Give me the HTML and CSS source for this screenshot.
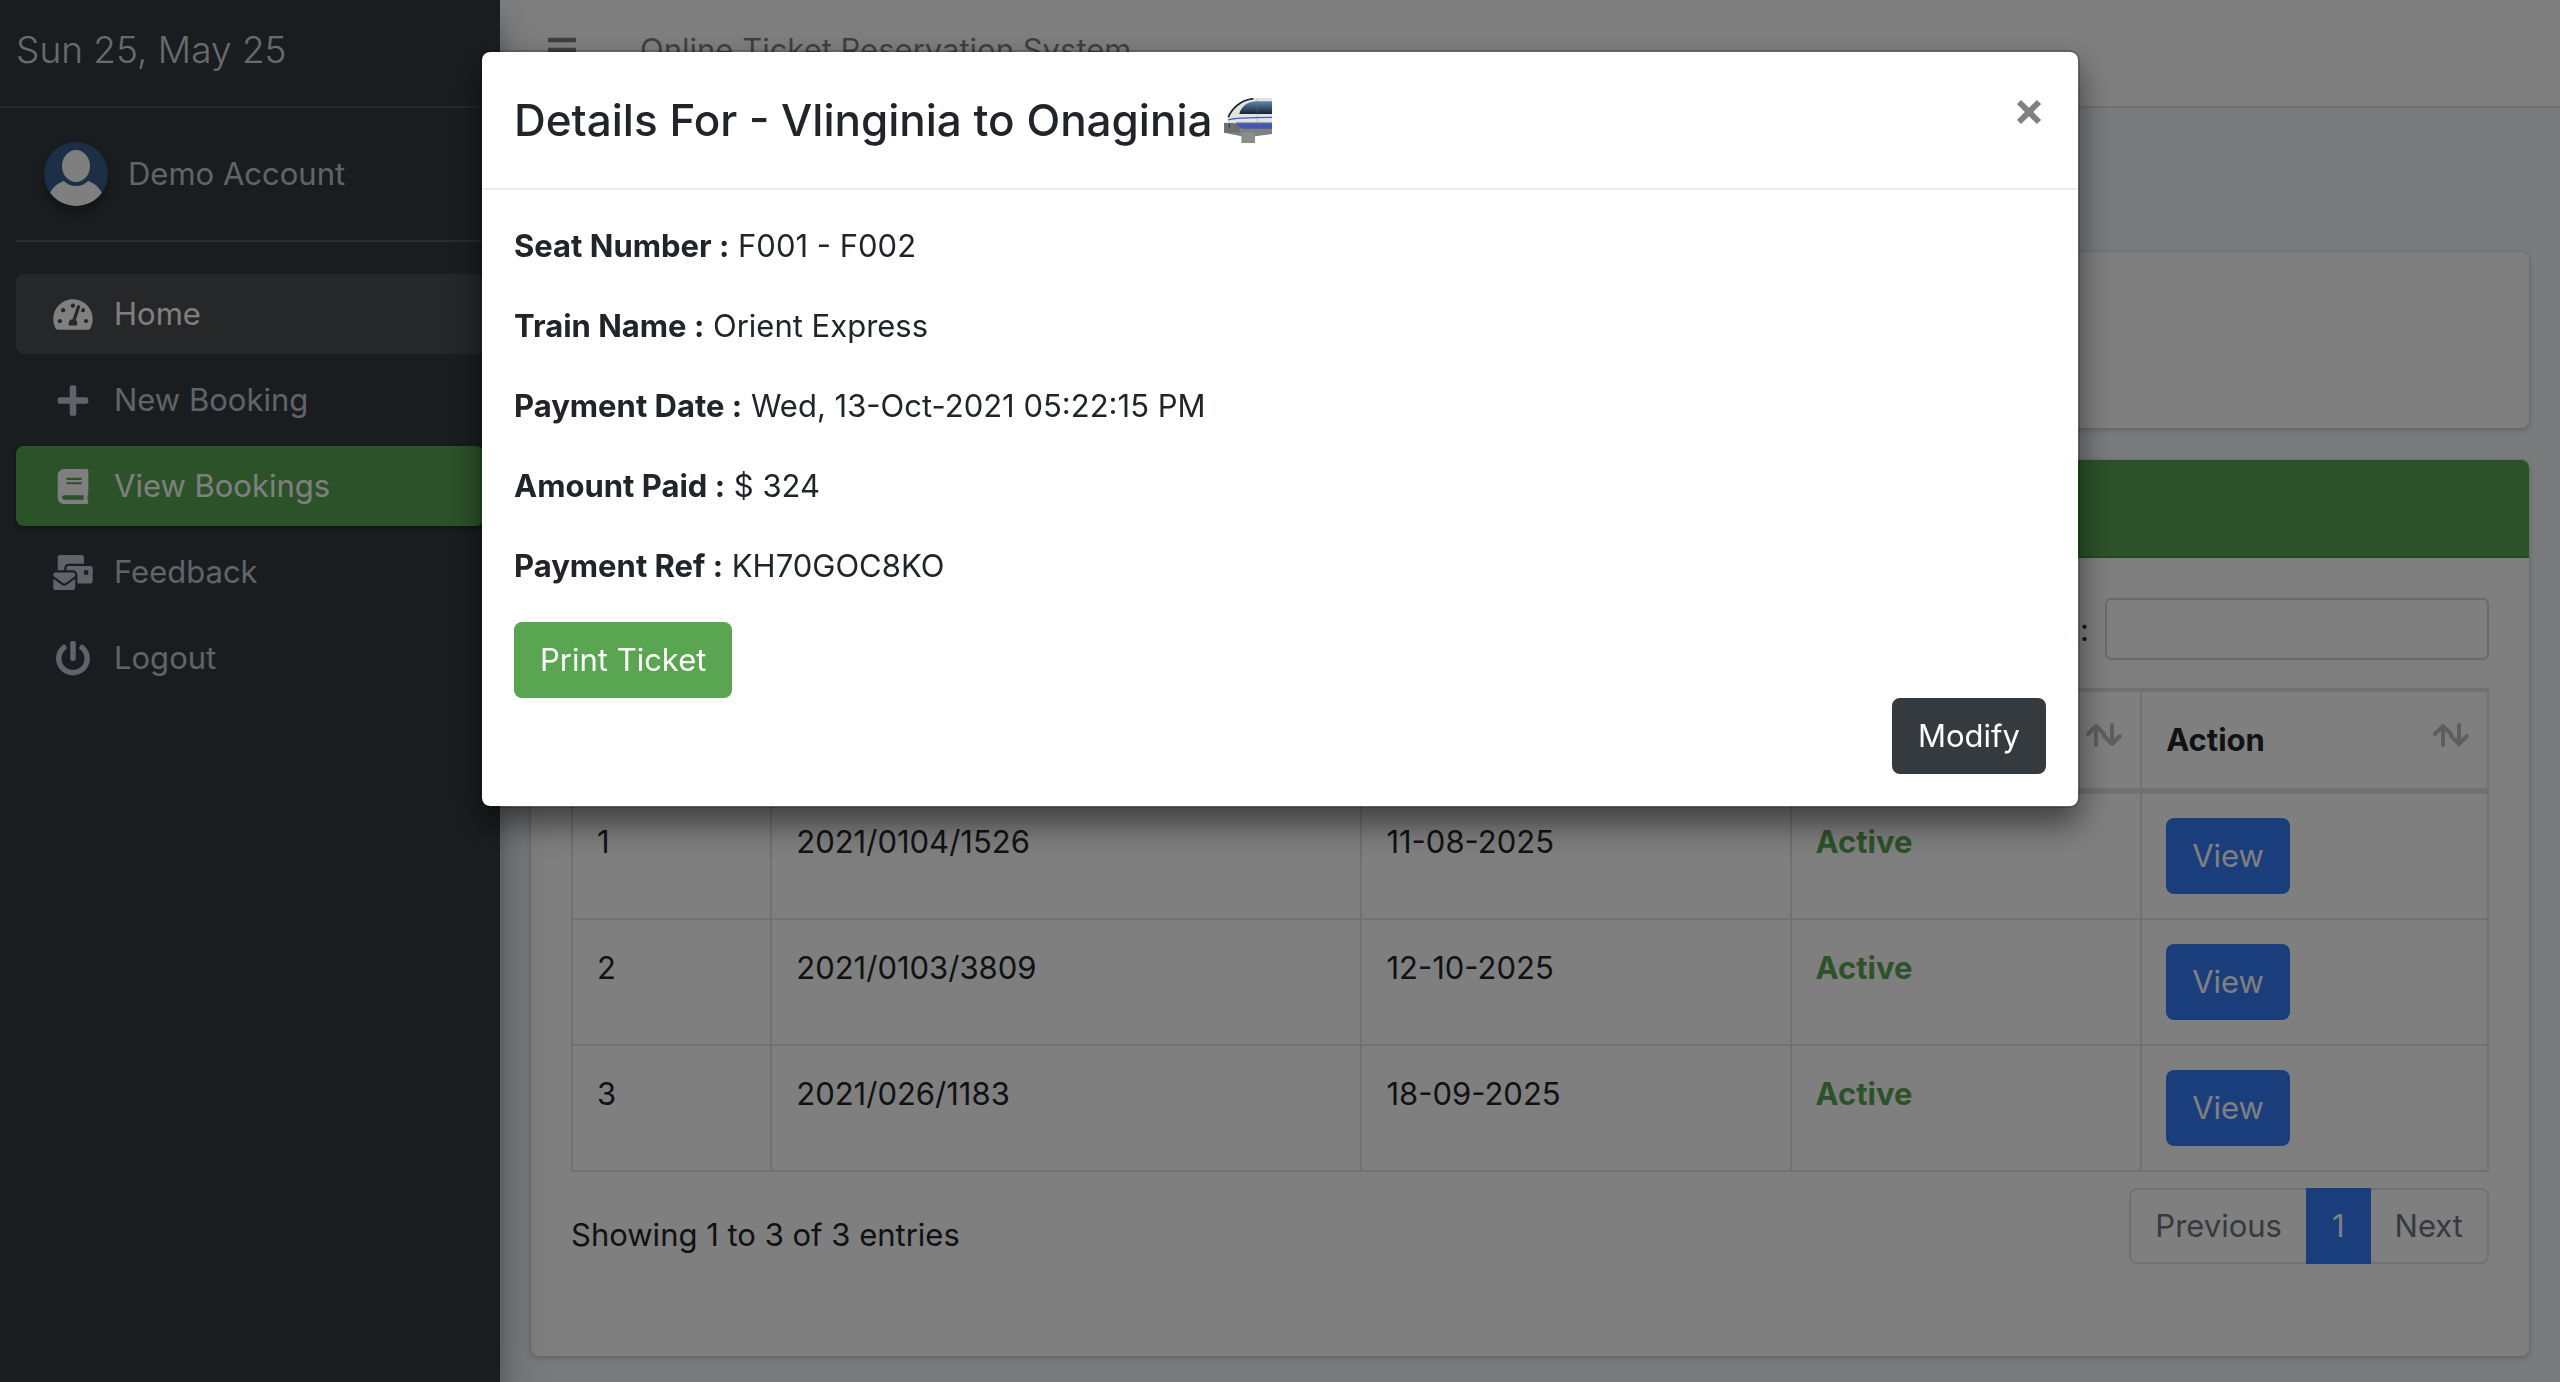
FILE: index.html
```html
<!DOCTYPE html>
<html lang="en">
<head>
  <meta charset="UTF-8" />
  <meta name="viewport" content="width=device-width, initial-scale=1.0"/>
  <title>Online Ticket Reservation System</title>
  <link rel="stylesheet" href="styles.css">
</head>
<body>

<div class="wrapper">

  <!-- Sidebar -->
  <aside class="sidebar">
    <a href="#" class="brand">Sun 25, May 25</a>
    <div class="sidebar-inner">
      <div class="user-panel">
        <svg class="avatar" viewBox="0 0 64 64">
          <circle cx="32" cy="32" r="32" fill="#365f8f"/>
          <ellipse cx="32" cy="24" rx="14" ry="16" fill="#fff"/>
          <path d="M6 51C9 45 14 41 20 39c3 3 7 5 12 5s9-2 12-5c6 2 11 6 14 12A32 32 0 0 1 6 51z" fill="#fff"/>
        </svg>
        <a href="#">Demo Account</a>
      </div>
      <nav class="menu">
        <a href="#" class="menu-link current">
          <svg class="menu-icon" viewBox="0 0 576 512"><path d="M288 32C128.94 32 0 160.94 0 320c0 52.8 14.25 102.26 39.06 144.8 5.61 9.62 16.3 15.2 27.44 15.2h443c11.14 0 21.83-5.58 27.44-15.2C561.75 422.26 576 372.8 576 320c0-159.06-128.94-288-288-288zm0 64c14.71 0 26.58 10.13 30.32 23.65-1.11 2.26-2.64 4.23-3.45 6.67l-9.22 27.67c-5.13 3.49-10.97 6.01-17.64 6.01-17.67 0-32-14.33-32-32S270.33 96 288 96zM96 384c-17.67 0-32-14.33-32-32s14.33-32 32-32 32 14.33 32 32-14.33 32-32 32zm48-160c-17.67 0-32-14.33-32-32s14.33-32 32-32 32 14.33 32 32-14.33 32-32 32zm246.77-72.41l-61.33 184C343.13 347.33 352 364.54 352 384c0 11.72-3.38 22.55-8.88 32H232.88c-5.5-9.45-8.88-20.28-8.88-32 0-33.94 26.5-61.43 59.9-63.59l61.34-184.01c4.17-12.56 17.73-19.45 30.36-15.17 12.57 4.19 19.35 17.79 15.17 30.36zm14.66 57.2l15.52-46.55c3.47-1.29 7.13-2.23 11.05-2.23 17.67 0 32 14.33 32 32s-14.33 32-32 32c-11.38-.01-20.89-6.28-26.57-15.22zM480 384c-17.67 0-32-14.33-32-32s14.33-32 32-32 32 14.33 32 32-14.33 32-32 32z"/></svg>
          Home
        </a>
        <a href="#" class="menu-link">
          <svg class="menu-icon" viewBox="0 0 448 512"><path d="M416 208H272V64c0-17.67-14.33-32-32-32h-32c-17.67 0-32 14.33-32 32v144H32c-17.67 0-32 14.33-32 32v32c0 17.67 14.33 32 32 32h144v144c0 17.67 14.33 32 32 32h32c17.67 0 32-14.33 32-32V304h144c17.67 0 32-14.33 32-32v-32c0-17.67-14.33-32-32-32z"/></svg>
          New Booking
        </a>
        <a href="#" class="menu-link active">
          <svg class="menu-icon" viewBox="0 0 448 512"><path d="M448 360V24c0-13.3-10.7-24-24-24H96C43 0 0 43 0 96v320c0 53 43 96 96 96h328c13.3 0 24-10.7 24-24v-16c0-7.5-3.5-14.3-8.9-18.7-4.2-15.4-4.2-59.3 0-74.7 5.4-4.3 8.9-11.1 8.9-18.6zM128 134c0-3.3 2.7-6 6-6h212c3.3 0 6 2.7 6 6v20c0 3.3-2.7 6-6 6H134c-3.3 0-6-2.7-6-6v-20zm0 64c0-3.3 2.7-6 6-6h212c3.3 0 6 2.7 6 6v20c0 3.3-2.7 6-6 6H134c-3.3 0-6-2.7-6-6v-20zm253.4 250H96c-17.7 0-32-14.3-32-32 0-17.6 14.4-32 32-32h285.4c-1.9 17.1-1.9 46.9 0 64z"/></svg>
          View Bookings
        </a>
        <a href="#" class="menu-link">
          <svg class="menu-icon" viewBox="0 0 576 512"><path d="M160 448c-25.6 0-51.2-22.4-64-32-64-44.8-83.2-60.8-96-70.4V480c0 17.67 14.33 32 32 32h256c17.67 0 32-14.33 32-32V345.6c-12.8 9.6-32 25.6-96 70.4-12.8 9.6-38.4 32-64 32zm128-192H32c-17.67 0-32 14.33-32 32v16c25.6 19.2 22.4 19.2 115.2 86.4 9.6 6.4 28.8 25.6 44.8 25.6s35.2-19.2 44.8-22.4c92.8-67.2 89.6-67.2 115.2-86.4V288c0-17.67-14.33-32-32-32zm256-96H224c-17.67 0-32 14.33-32 32v32h96c33.21 0 60.59 25.42 63.71 57.82l.29-.22V416h192c17.67 0 32-14.33 32-32V192c0-17.67-14.33-32-32-32zm-32 128h-64v-64h64v64zm-352-96c0-35.29 28.71-64 64-64h224V32c0-17.67-14.33-32-32-32H96C78.33 0 64 14.33 64 32v192h96v-32z"/></svg>
          Feedback
        </a>
        <a href="#" class="menu-link">
          <svg class="menu-icon" viewBox="0 0 512 512"><path d="M400 54.1c63 45 104 118.6 104 201.9 0 136.8-110.8 247.7-247.5 248C120 504.3 8.2 393 8 256.4 7.9 173.1 48.9 99.3 111.8 54.2c11.7-8.3 28-4.8 35 7.7L162.6 90c5.9 10.5 3.1 23.8-6.6 31-41.5 30.8-68 79.6-68 134.9-.1 92.3 74.5 168.1 168 168.1 91.6 0 168.6-74.2 168-169.1-.3-51.8-24.7-101.8-68.1-134-9.7-7.2-12.4-20.5-6.5-30.9l15.8-28.1c7-12.4 23.2-16.1 34.8-7.8zM296 264V24c0-13.3-10.7-24-24-24h-32c-13.3 0-24 10.7-24 24v240c0 13.3 10.7 24 24 24h32c13.3 0 24-10.7 24-24z"/></svg>
          Logout
        </a>
      </nav>
    </div>
  </aside>

  <!-- Page -->
  <div class="page">
    <header class="topbar">
      <a href="#" class="toggle" aria-label="Toggle menu">
        <svg viewBox="0 0 448 512"><path d="M16 132h416c8.837 0 16-7.163 16-16V76c0-8.837-7.163-16-16-16H16C7.163 60 0 67.163 0 76v40c0 8.837 7.163 16 16 16zm0 160h416c8.837 0 16-7.163 16-16v-40c0-8.837-7.163-16-16-16H16c-8.837 0-16 7.163-16 16v40c0 8.837 7.163 16 16 16zm0 160h416c8.837 0 16-7.163 16-16v-40c0-8.837-7.163-16-16-16H16c-8.837 0-16 7.163-16 16v40c0 8.837 7.163 16 16 16z"/></svg>
      </a>
      <a href="#">Online Ticket Reservation System</a>
    </header>

    <main class="content">
      <section class="card card-intro"></section>

      <section class="card">
        <div class="card-header"></div>
        <div class="card-body">
          <div class="filter">
            <label for="search">Search:</label>
            <input type="search" id="search">
          </div>

          <table class="bookings">
            <colgroup>
              <col class="col-no">
              <col class="col-code">
              <col class="col-date">
              <col class="col-status">
              <col>
            </colgroup>
            <thead>
              <tr>
                <th>#</th>
                <th>Code</th>
                <th>Date</th>
                <th><div class="th-inner">Status <svg class="sort" viewBox="0 0 36 24"><path d="M2 11l8-8 8 8M10 4v18M18 13l8 8 8-8M26 20V2"/></svg></div></th>
                <th><div class="th-inner">Action <svg class="sort" viewBox="0 0 36 24"><path d="M2 11l8-8 8 8M10 4v18M18 13l8 8 8-8M26 20V2"/></svg></div></th>
              </tr>
            </thead>
            <tbody>
              <tr>
                <td>1</td>
                <td>2021/0104/1526</td>
                <td>11-08-2025</td>
                <td class="status">Active</td>
                <td><button class="btn btn-primary">View</button></td>
              </tr>
              <tr>
                <td>2</td>
                <td>2021/0103/3809</td>
                <td>12-10-2025</td>
                <td class="status">Active</td>
                <td><button class="btn btn-primary">View</button></td>
              </tr>
              <tr>
                <td>3</td>
                <td>2021/026/1183</td>
                <td>18-09-2025</td>
                <td class="status">Active</td>
                <td><button class="btn btn-primary">View</button></td>
              </tr>
            </tbody>
          </table>

          <div class="table-footer">
            <div class="info">Showing 1 to 3 of 3 entries</div>
            <nav class="pagination">
              <a href="#">Previous</a>
              <a href="#" class="active">1</a>
              <a href="#">Next</a>
            </nav>
          </div>
        </div>
      </section>
    </main>
  </div>
</div>

<!-- Booking details modal -->
<div class="backdrop">
  <div class="modal" role="dialog" aria-labelledby="modal-title">
    <div class="modal-header">
      <h4 id="modal-title">Details For - Vlinginia to Onaginia
        <svg class="train" viewBox="0 0 144 135">
          <defs>
            <linearGradient id="glass" x1="0" y1="0" x2="0" y2="1">
              <stop offset="0" stop-color="#5d87ae"/>
              <stop offset="1" stop-color="#16222f"/>
            </linearGradient>
          </defs>
          <path d="M0 74h144v34l-51 7v20H53v-20L0 104z" fill="#7d817f"/>
          <path d="M0 75h48v28H0z" fill="#6c706f"/>
          <path d="M16 76v14" stroke="#333" stroke-width="3"/>
          <path d="M53 103h40v32H53z" fill="#8b8f8c"/>
          <path d="M11 66C14 42 44 3 86 0h58v78H46L11 73z" fill="#e3e4e0"/>
          <path d="M13 58C22 34 48 6 88 2" fill="none" stroke="#1c2530" stroke-width="5"/>
          <path d="M46 48C50 28 68 12 94 10h50v38z" fill="url(#glass)"/>
          <path d="M100 2v74" stroke="#777" stroke-width="1"/>
          <path d="M12 66c16-6 40-8 132-8" fill="none" stroke="#4059d4" stroke-width="4"/>
          <path d="M34 74h110v18H54L40 80z" fill="#4455b4"/>
          <path d="M34 72h110v4H38z" fill="#9b9d9b"/>
        </svg>
      </h4>
      <button class="close" aria-label="Close">
        <svg viewBox="0 0 26 26"><path d="M3 3l20 20M23 3L3 23"/></svg>
      </button>
    </div>
    <div class="modal-body">
      <p><b>Seat Number :</b> F001 - F002</p>
      <p><b>Train Name :</b> Orient Express</p>
      <p><b>Payment Date :</b> Wed, 13-Oct-2021 05:22:15 PM</p>
      <p><b>Amount Paid :</b> $ 324</p>
      <p><b>Payment Ref :</b> KH70GOC8KO</p>
      <button class="btn btn-success">Print Ticket</button>
      <div class="modal-actions">
        <button class="btn btn-dark">Modify</button>
      </div>
    </div>
  </div>
</div>

</body>
</html>
```
FILE: styles.css
```css
* {
  box-sizing: border-box;
}

body {
  margin: 0;
  font-family: Inter, "Liberation Sans", sans-serif;
  font-size: 31px;
  line-height: 48px;
  color: #212529;
  background: #f4f6f9;
  overflow: hidden;
}

a {
  color: inherit;
  text-decoration: none;
}

.wrapper {
  display: flex;
  min-height: 100vh;
}

/* Sidebar */
.sidebar {
  width: 500px;
  flex-shrink: 0;
  background: #353b40;
  color: #c2c7d0;
  position: relative;
  z-index: 2;
  box-shadow: 0 28px 56px rgba(0, 0, 0, 0.25), 0 20px 20px rgba(0, 0, 0, 0.22);
}

.brand {
  display: block;
  height: 108px;
  padding: 20px 16px;
  border-bottom: 2px solid #4b545c;
  font-size: 37px;
  font-weight: 300;
  line-height: 60px;
  color: rgba(255, 255, 255, 0.8);
}

.sidebar-inner {
  padding: 0 16px;
}

.user-panel {
  display: flex;
  align-items: center;
  gap: 20px;
  height: 134px;
  padding-left: 28px;
  border-bottom: 2px solid #4f5962;
}

.avatar {
  width: 64px;
  height: 64px;
  border-radius: 50%;
  box-shadow: 0 6px 12px rgba(0, 0, 0, 0.16), 0 6px 12px rgba(0, 0, 0, 0.23);
}

.menu {
  display: flex;
  flex-direction: column;
  gap: 6px;
  margin-top: 32px;
}

.menu-link {
  display: flex;
  align-items: center;
  gap: 16px;
  padding: 16px 32px;
  border-radius: 8px;
}

.menu-link.current {
  background: #4c4e50;
  color: #fff;
}

.menu-link.active {
  background: #59a553;
  color: #fff;
  box-shadow: 0 2px 6px rgba(0, 0, 0, 0.12), 0 2px 4px rgba(0, 0, 0, 0.24);
}

.menu-icon {
  width: 50px;
  height: 35px;
  fill: currentColor;
}

/* Top bar */
.page {
  flex: 1;
  min-width: 0;
}

.topbar {
  display: flex;
  align-items: center;
  gap: 64px;
  height: 108px;
  padding: 0 48px 6px;
  background: #fff;
  border-bottom: 2px solid #dee2e6;
  color: rgba(0, 0, 0, 0.5);
}

.toggle svg {
  display: block;
  width: 28px;
  height: 32px;
  fill: currentColor;
}

/* Cards */
.content {
  display: flex;
  flex-direction: column;
  gap: 32px;
  padding: 144px 31px 26px;
}

.card {
  background: #fff;
  border-radius: 8px;
  box-shadow: 0 0 2px rgba(0, 0, 0, 0.13), 0 2px 6px rgba(0, 0, 0, 0.2);
}

.card-intro {
  height: 176px;
}

.card-header {
  height: 98px;
  background: #59a553;
  border-bottom: 2px solid rgba(0, 0, 0, 0.13);
  border-radius: 8px 8px 0 0;
}

.card-body {
  padding: 40px 40px 92px;
}

.filter {
  display: flex;
  justify-content: flex-end;
  align-items: baseline;
  gap: 16px;
  margin-bottom: 28px;
}

.filter input {
  width: 384px;
  height: 62px;
  padding: 8px 16px;
  border: 2px solid #ced4da;
  border-radius: 6px;
  background: #fff;
  font: inherit;
}

/* Bookings table */
.bookings {
  width: 100%;
  table-layout: fixed;
  border-collapse: separate;
  border-spacing: 0;
  border: 2px solid #dee2e6;
  border-width: 2px 0 0 2px;
}

.col-no { width: 10.4%; }
.col-code { width: 30.8%; }
.col-date { width: 22.4%; }
.col-status { width: 18.3%; }

.bookings th,
.bookings td {
  padding: 24px;
  border: 0 solid #dee2e6;
  border-width: 2px 2px 0 0;
  text-align: left;
  vertical-align: top;
}

.bookings th {
  border-bottom-width: 4px;
}

.bookings tr:last-child td {
  border-bottom-width: 2px;
}

.th-inner {
  display: flex;
  justify-content: space-between;
  margin-right: -6px;
}

.sort {
  width: 36px;
  height: 24px;
  margin-top: 7px;
  fill: none;
  stroke: #212529;
  stroke-width: 4;
  stroke-linecap: round;
  stroke-linejoin: round;
  opacity: 0.3;
}

.bookings tr:last-child .status,
.bookings .status {
  color: #59a553;
  font-weight: 700;
}

.bookings .status {
  border-color: #dee2e6;
}

.table-footer {
  display: flex;
  justify-content: space-between;
  align-items: flex-start;
  padding-top: 16px;
}

.info {
  padding-top: 23px;
}

.pagination {
  display: flex;
  border: 2px solid #dee2e6;
  border-radius: 8px;
  color: #6c757d;
}

.pagination a {
  padding: 12px 24px;
}

.pagination .active {
  margin: -2px 0;
  padding: 14px 26px;
  background: #347cf7;
  color: #fff;
}

/* Buttons */
.btn {
  display: block;
  padding: 12px 24px;
  border: 2px solid transparent;
  border-radius: 8px;
  font: inherit;
  color: #fff;
  cursor: pointer;
}

.btn-primary {
  background: #347cf7;
  border-color: #347cf7;
}

.btn-success {
  background: #59a551;
  border-color: #59a551;
}

.btn-dark {
  background: #353a3f;
  border-color: #353a3f;
}

/* Modal */
.backdrop {
  position: fixed;
  inset: 0;
  z-index: 10;
  padding-top: 50px;
  background: rgba(0, 0, 0, 0.5);
}

.modal {
  max-width: 1600px;
  margin: 0 auto;
  background: #fff;
  background-clip: padding-box;
  border: 2px solid rgba(0, 0, 0, 0.2);
  border-radius: 10px;
  box-shadow: 0 16px 32px rgba(0, 0, 0, 0.5);
}

.modal-header {
  display: flex;
  justify-content: space-between;
  align-items: flex-start;
  padding: 32px;
  border-bottom: 2px solid #e9ecef;
}

.modal-header h4 {
  margin: 0;
  font-size: 44px;
  font-weight: 500;
  line-height: 72px;
}

.train {
  width: 48px;
  height: 45px;
  vertical-align: -7px;
}

.close {
  padding: 15px 4px;
  border: 0;
  background: none;
  cursor: pointer;
}

.close svg {
  display: block;
  width: 26px;
  height: 26px;
  stroke: #808080;
  stroke-width: 6;
}

.modal-body {
  padding: 32px;
}

.modal-body p {
  margin: 0 0 32px;
}

.modal-actions {
  display: flex;
  justify-content: flex-end;
}
```
